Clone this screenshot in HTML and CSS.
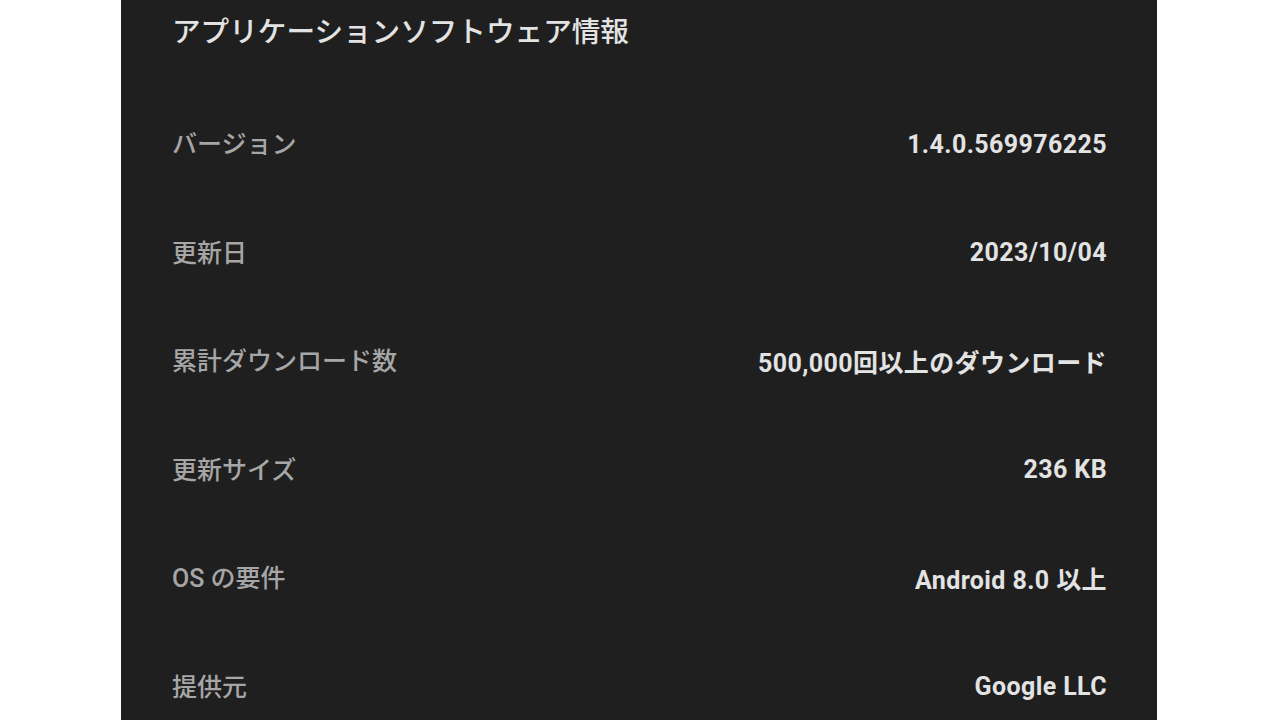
FILE: index.html
```html
<!DOCTYPE html>
<html lang="ja">
<head>
    <meta charset="UTF-8">
    <meta name="viewport" content="width=device-width, initial-scale=1.0">
    <title>アプリケーションソフトウェア情報</title>
    <link rel="stylesheet" href="styles.css">
</head>
<body>
    <div class="panel">
        <h1 class="title">アプリケーションソフトウェア情報</h1>

        <div class="info-list">
            <div class="info-row">
                <span class="info-label">バージョン</span>
                <span class="info-value">1.4.0.569976225</span>
            </div>
            <div class="info-row">
                <span class="info-label">更新日</span>
                <span class="info-value">2023/10/04</span>
            </div>
            <div class="info-row">
                <span class="info-label">累計ダウンロード数</span>
                <span class="info-value">500,000回以上のダウンロード</span>
            </div>
            <div class="info-row">
                <span class="info-label">更新サイズ</span>
                <span class="info-value">236 KB</span>
            </div>
            <div class="info-row">
                <span class="info-label">OS の要件</span>
                <span class="info-value">Android 8.0 以上</span>
            </div>
            <div class="info-row">
                <span class="info-label">提供元</span>
                <span class="info-value">Google LLC</span>
            </div>
        </div>
    </div>
</body>
</html>
```

FILE: styles.css
```css
body {
    margin: 0;
    background-color: #fff;
    font-family: 'Roboto', 'Noto Sans CJK JP', sans-serif;
}

.panel {
    width: 1036px;
    height: 720px;
    margin: 0 0 0 121px;
    padding: 0 50px 0 51px;
    box-sizing: border-box;
    background-color: #1f1f1f;
    overflow: hidden;
}

.title {
    margin: 0;
    height: 90px;
    padding-top: 14px;
    box-sizing: border-box;
    font-size: 28.6px;
    font-weight: 500;
    line-height: 36px;
    color: #e3e3e3;
}

.info-row {
    display: flex;
    justify-content: space-between;
    align-items: center;
    height: 108.5px;
}

.info-label {
    margin-bottom: 4px;
    font-size: 25px;
    font-weight: 500;
    color: #a6a6a6;
}

.info-value {
    font-size: 25px;
    font-weight: 700;
    letter-spacing: 0.4px;
    color: #e3e3e3;
}
```
